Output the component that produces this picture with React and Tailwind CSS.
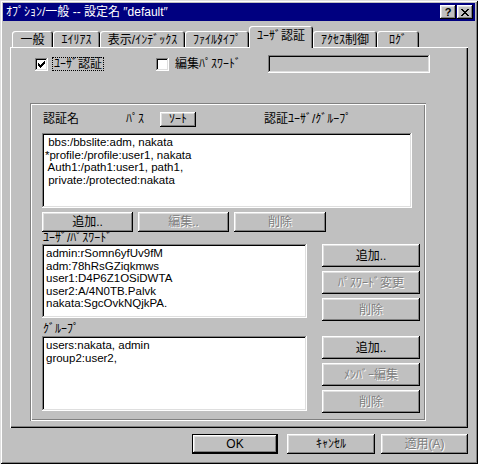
import React from "react";

const raised =
  "shadow-[inset_-1px_-1px_#000,inset_1px_1px_#fff,inset_-2px_-2px_#808080,inset_2px_2px_#dfdfdf]";
const sunken =
  "shadow-[inset_-1px_-1px_#fff,inset_1px_1px_#808080,inset_-2px_-2px_#dfdfdf,inset_2px_2px_#000]";
const disabledText = "text-[#808080] [text-shadow:1px_1px_0_#fff]";

function Btn({ children, disabled, className = "" }) {
  return (
    <div
      className={`bg-[#c0c0c0] ${raised} flex items-center justify-center text-[12px] leading-[12px] ${
        disabled ? disabledText : "text-black"
      } ${className}`}
    >
      {children}
    </div>
  );
}

function Tab({ label, width, selected }) {
  if (selected) {
    return (
      <div
        className="h-[22px] bg-[#c0c0c0] rounded-t-[3px] shadow-[inset_1px_1px_#fff,inset_-1px_0_#000,inset_-2px_0_#808080] flex items-start justify-center pt-[4px] text-[12px] leading-[12px] text-black"
        style={{ width }}
      >
        {label}
      </div>
    );
  }
  return (
    <div
      className="mt-[5px] h-[16px] bg-[#c0c0c0] rounded-t-[3px] shadow-[inset_1px_1px_#fff,inset_-1px_0_#000,inset_-2px_0_#808080] flex items-center justify-center pt-[2px] text-[12px] leading-[12px] text-black"
      style={{ width }}
    >
      {label}
    </div>
  );
}

function Check({ checked }) {
  return (
    <div className={`w-[13px] h-[13px] bg-white ${sunken} flex items-center justify-center shrink-0`}>
      {checked && (
        <svg width="7" height="7" viewBox="0 0 7 7" shapeRendering="crispEdges">
          <path d="M6 0h1v3h-1v1h-1v1h-1v1h-1v1h-1v-1h-1v-1h-1v-3h1v1h1v1h1v-1h1v-1h1z" fill="#000" />
        </svg>
      )}
    </div>
  );
}

function ListBox({ lines, className = "", pad = "pl-[1px] pt-[2px]" }) {
  return (
    <div className={`bg-white ${sunken} ${className} p-[2px]`}>
      <div className={`${pad} text-[11.5px] leading-[12.5px] text-black whitespace-pre`}>
        {lines.map((l, i) => (
          <div key={i}>{l}</div>
        ))}
      </div>
    </div>
  );
}

export default function App() {
  return (
    <div className="w-[478px] h-[464px] bg-[#c0c0c0] p-[3px] shadow-[inset_1px_1px_#dfdfdf,inset_-1px_-1px_#000,inset_2px_2px_#fff,inset_-2px_-2px_#808080] flex flex-col font-['Liberation_Sans','Noto_Sans_CJK_JP',sans-serif] overflow-hidden">
      {/* Title bar */}
      <div className="h-[18px] bg-[#000080] flex items-center pl-[3px] pr-[2px]">
        <div className="text-white text-[12px] leading-[12px] whitespace-pre">
          ｵﾌﾟｼｮﾝ/一般 -- 設定名 ″default″
        </div>
        <div className="ml-auto flex gap-[1px]">
          <div className={`w-[16px] h-[14px] bg-[#c0c0c0] ${raised} flex items-center justify-center text-[11px] leading-[11px] font-bold text-black`}>
            ?
          </div>
          <div className={`w-[16px] h-[14px] bg-[#c0c0c0] ${raised} flex items-center justify-center`}>
            <svg width="8" height="7" viewBox="0 0 8 7" shapeRendering="crispEdges">
              <path d="M0 0h2v1h1v1h2v-1h1v-1h2v1h-1v1h-1v1h-1v1h1v1h1v1h1v1h-2v-1h-1v-1h-2v1h-1v1h-2v-1h1v-1h1v-1h1v-1h-1v-1h-1v-1h-1z" fill="#000" />
            </svg>
          </div>
        </div>
      </div>

      {/* Tabs + panel */}
      <div className="ml-[7px] w-[458px] mt-[5px] flex flex-col">
        <div className="h-[21px] flex items-start pl-[2px] relative z-10">
          <Tab label="一般" width={41} />
          <Tab label="ｴｲﾘｱｽ" width={47} />
          <Tab label="表示/ｲﾝﾃﾞｯｸｽ" width={85} />
          <Tab label="ﾌｧｲﾙﾀｲﾌﾟ" width={64} />
          <Tab label="ﾕｰｻﾞ認証" width={64} selected />
          <Tab label="ｱｸｾｽ制御" width={64} />
          <Tab label="ﾛｸﾞ" width={42} />
        </div>
        <div className="h-[381px] bg-[#c0c0c0] shadow-[inset_1px_1px_#fff,inset_-1px_-1px_#000,inset_-2px_-2px_#808080] flex flex-col">
          {/* checkbox row */}
          <div className="mt-[8px] h-[18px] flex items-center pl-[25px] text-[12px] leading-[12px] text-black">
            <div className="w-[121px] flex items-center">
              <Check checked />
              <div className="ml-[4px] h-[14px] px-[1px] border border-dotted border-black flex items-center">
                ﾕｰｻﾞ認証
              </div>
            </div>
            <div className="w-[112px] flex items-center">
              <Check />
              <div className="ml-[6px]">編集ﾊﾟｽﾜｰﾄﾞ</div>
            </div>
            <div className={`w-[162px] h-[18px] bg-[#c0c0c0] ${sunken}`} />
          </div>

          {/* group box */}
          <div className="ml-[20px] mt-[30px] w-[396px] h-[318px] shadow-[inset_1px_1px_#808080,inset_-1px_-1px_#fff,inset_2px_2px_#fff,inset_-2px_-2px_#808080] flex flex-col pl-[12px] text-[12px] leading-[12px] text-black">
            <div className="mt-[8px] h-[16px] flex items-center">
              <div className="w-[84px] pl-[1px]">認証名</div>
              <div className="w-[34px]">ﾊﾟｽ</div>
              <Btn className="w-[36px] h-[15px]">ｿｰﾄ</Btn>
              <div className="ml-[68px]">認証ﾕｰｻﾞ/ｸﾞﾙｰﾌﾟ</div>
            </div>
            <ListBox
              className="mt-[6px] w-[370px] h-[75px]"
              pad="pl-[1px] pt-[1px]"
              lines={[
                " bbs:/bbslite:adm, nakata",
                "*profile:/profile:user1, nakata",
                " Auth1:/path1:user1, path1,",
                " private:/protected:nakata",
              ]}
            />
            <div className="mt-[4px] h-[20px] flex gap-[5px]">
              <Btn className="w-[91px] h-[20px]">追加..</Btn>
              <Btn disabled className="w-[91px] h-[20px]">
                編集..
              </Btn>
              <Btn disabled className="w-[92px] h-[20px]">
                削除
              </Btn>
            </div>
            <div className="h-[12px] pl-[1px] flex items-center">ﾕｰｻﾞ/ﾊﾟｽﾜｰﾄﾞ</div>
            <div className="h-[78px] flex items-start">
              <ListBox
                className="w-[265px] h-[74px]"
                pad="pl-[2px] pt-[1px]"
                lines={[
                  "admin:rSomn6yfUv9fM",
                  "adm:78hRsGZiqkmws",
                  "user1:D4P6Z1OSiDWTA",
                  "user2:A/4N0TB.Palvk",
                  "nakata:SgcOvkNQjkPA.",
                ]}
              />
              <div className="ml-[15px] flex flex-col gap-[4px]">
                <Btn className="w-[98px] h-[23px]">追加..</Btn>
                <Btn disabled className="w-[98px] h-[23px]">
                  ﾊﾟｽﾜｰﾄﾞ変更
                </Btn>
                <Btn disabled className="w-[98px] h-[23px]">
                  削除
                </Btn>
              </div>
            </div>
            <div className="h-[14px] pl-[1px] flex items-center">ｸﾞﾙｰﾌﾟ</div>
            <div className="flex items-start">
              <ListBox
                className="w-[265px] h-[75px]"
                pad="pl-[2px] pt-[1px]"
                lines={["users:nakata, admin", "group2:user2,"]}
              />
              <div className="ml-[15px] flex flex-col gap-[4px]">
                <Btn className="w-[98px] h-[23px]">追加..</Btn>
                <Btn disabled className="w-[98px] h-[23px]">
                  ﾒﾝﾊﾞｰ編集
                </Btn>
                <Btn disabled className="w-[98px] h-[23px]">
                  削除
                </Btn>
              </div>
            </div>
          </div>
        </div>
      </div>

      {/* bottom buttons */}
      <div className="mt-[6px] flex justify-end mr-[7px]">
        <div className="w-[86px] h-[20px] border border-black flex">
          <Btn className="w-full h-full">OK</Btn>
        </div>
        <Btn className="ml-[9px] w-[88px] h-[20px]">ｷｬﾝｾﾙ</Btn>
        <Btn disabled className="ml-[6px] w-[87px] h-[20px]">
          適用(A)
        </Btn>
      </div>
    </div>
  );
}
